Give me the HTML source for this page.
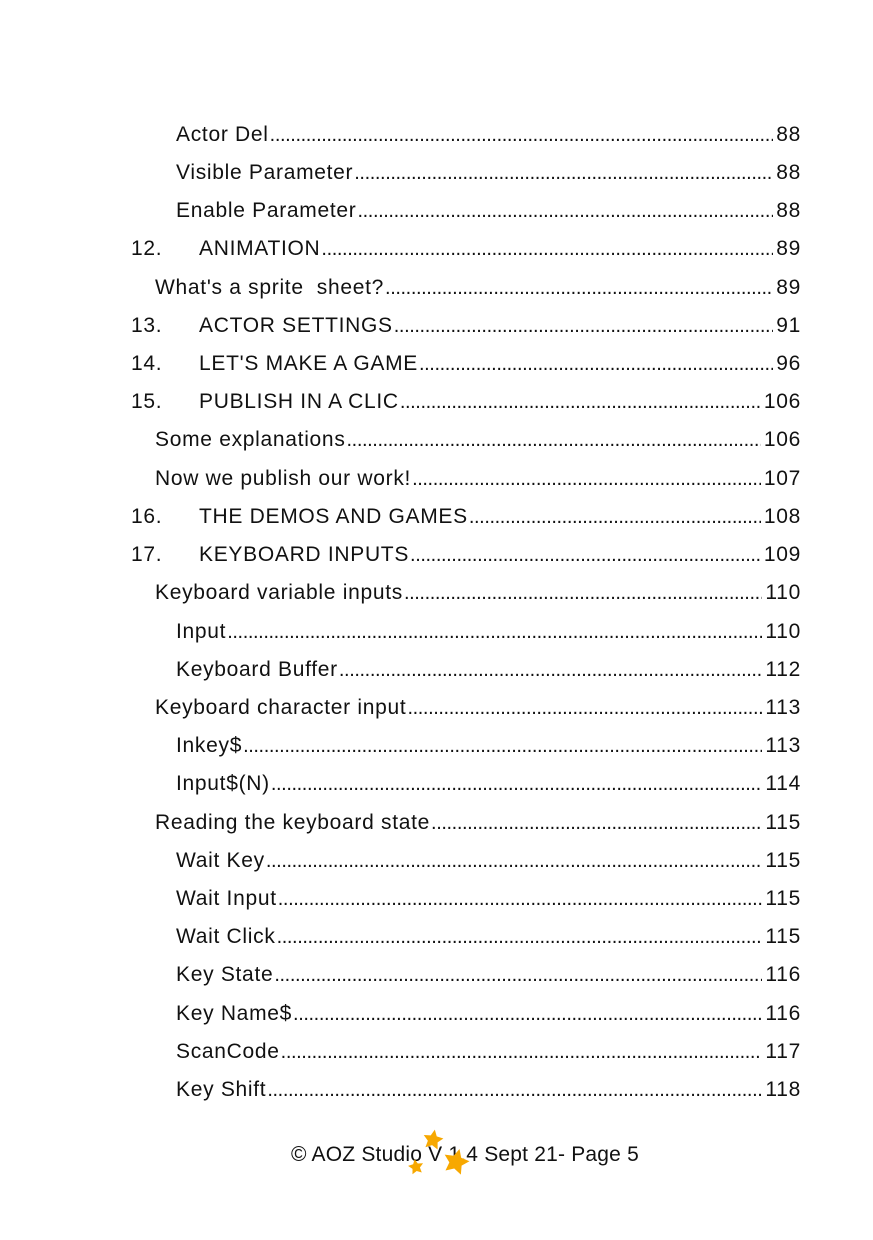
<!DOCTYPE html>
<html><head><meta charset="utf-8"><style>
body{margin:0;width:873px;height:1240px;background:#fff;position:relative;font-family:"Liberation Sans",sans-serif;color:#111;overflow:hidden}
.r{position:absolute;right:72px;height:38px;line-height:38px;display:flex;font-size:21px;letter-spacing:0.7px;white-space:nowrap}
.n{display:inline-block;width:68px}
.d{flex:1;overflow:hidden;font-size:20px;letter-spacing:-0.4px;margin:0 3px 0 1px}
.d::before{content:"....................................................................................................................................................................................................................................................."}
.f{position:absolute;top:1141px;left:0;width:930px;text-align:center;font-size:21px;letter-spacing:0.2px;line-height:28px}
</style></head><body>
<div class="r" style="top:116px;left:176px"><span>Actor Del</span><span class="d"></span><span>88</span></div>
<div class="r" style="top:154px;left:176px"><span>Visible Parameter</span><span class="d"></span><span>88</span></div>
<div class="r" style="top:192px;left:176px"><span>Enable Parameter</span><span class="d"></span><span>88</span></div>
<div class="r" style="top:230px;left:131px"><span><span class="n">12.</span>ANIMATION</span><span class="d"></span><span>89</span></div>
<div class="r" style="top:269px;left:155px"><span>What's a sprite&nbsp; sheet?</span><span class="d"></span><span>89</span></div>
<div class="r" style="top:307px;left:131px"><span><span class="n">13.</span>ACTOR SETTINGS</span><span class="d"></span><span>91</span></div>
<div class="r" style="top:345px;left:131px"><span><span class="n">14.</span>LET'S MAKE A GAME</span><span class="d"></span><span>96</span></div>
<div class="r" style="top:383px;left:131px"><span><span class="n">15.</span>PUBLISH IN A CLIC</span><span class="d"></span><span>106</span></div>
<div class="r" style="top:421px;left:155px"><span>Some explanations</span><span class="d"></span><span>106</span></div>
<div class="r" style="top:460px;left:155px"><span>Now we publish our work!</span><span class="d"></span><span>107</span></div>
<div class="r" style="top:498px;left:131px"><span><span class="n">16.</span>THE DEMOS AND GAMES</span><span class="d"></span><span>108</span></div>
<div class="r" style="top:536px;left:131px"><span><span class="n">17.</span>KEYBOARD INPUTS</span><span class="d"></span><span>109</span></div>
<div class="r" style="top:574px;left:155px"><span>Keyboard variable inputs</span><span class="d"></span><span>110</span></div>
<div class="r" style="top:613px;left:176px"><span>Input</span><span class="d"></span><span>110</span></div>
<div class="r" style="top:651px;left:176px"><span>Keyboard Buffer</span><span class="d"></span><span>112</span></div>
<div class="r" style="top:689px;left:155px"><span>Keyboard character input</span><span class="d"></span><span>113</span></div>
<div class="r" style="top:727px;left:176px"><span>Inkey$</span><span class="d"></span><span>113</span></div>
<div class="r" style="top:765px;left:176px"><span>Input$(N)</span><span class="d"></span><span>114</span></div>
<div class="r" style="top:804px;left:155px"><span>Reading the keyboard state</span><span class="d"></span><span>115</span></div>
<div class="r" style="top:842px;left:176px"><span>Wait Key</span><span class="d"></span><span>115</span></div>
<div class="r" style="top:880px;left:176px"><span>Wait Input</span><span class="d"></span><span>115</span></div>
<div class="r" style="top:918px;left:176px"><span>Wait Click</span><span class="d"></span><span>115</span></div>
<div class="r" style="top:956px;left:176px"><span>Key State</span><span class="d"></span><span>116</span></div>
<div class="r" style="top:995px;left:176px"><span>Key Name$</span><span class="d"></span><span>116</span></div>
<div class="r" style="top:1033px;left:176px"><span>ScanCode</span><span class="d"></span><span>117</span></div>
<div class="r" style="top:1071px;left:176px"><span>Key Shift</span><span class="d"></span><span>118</span></div>
<div class="f">© AOZ Studio V 1.4 Sept 21- Page 5</div>
<svg style="position:absolute;left:0;top:0" width="873" height="1240">
<defs><polygon id="s" points="0,-10 2.9,-4 9.5,-3.1 4.7,1.5 5.9,8.1 0,5 -5.9,8.1 -4.7,1.5 -9.5,-3.1 -2.9,-4" fill="#f7a800"/></defs>
<use href="#s" transform="translate(433,1140) rotate(10) scale(1.05)"/>
<use href="#s" transform="translate(416,1167) rotate(-10) scale(0.8)"/>
<use href="#s" transform="translate(456,1162) rotate(15) scale(1.35)"/>
</svg>
</body></html>
